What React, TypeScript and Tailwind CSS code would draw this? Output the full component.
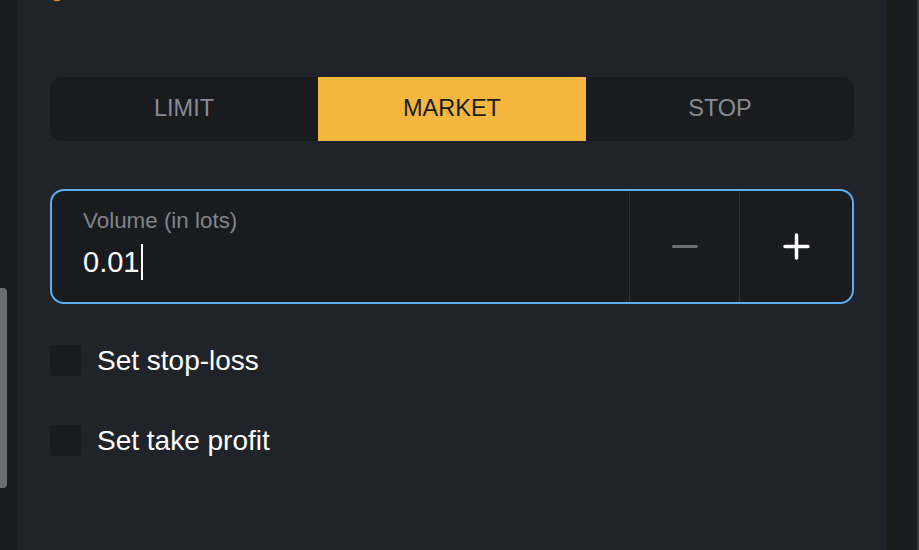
const tabs = ['LIMIT', 'MARKET', 'STOP'];

const OrderPanel = () => {
  return (
    <div className="flex h-[550px] w-[919px] overflow-hidden bg-[#1a1b1f] font-['Liberation_Sans',Arial,sans-serif]">
      {/* Left strip with scrollbar thumb */}
      <div className="w-[17px] shrink-0 pt-[288px]">
        <div className="h-[200px] w-[7px] rounded-r-[4px] bg-[#6b6c70]" />
      </div>

      {/* Main panel */}
      <main className="flex w-[870px] shrink-0 flex-col bg-[#20232a] px-[33px]">
        <div className="h-[77px] -ml-[33px] pl-[36px]">
          <svg width="8" height="2" viewBox="0 0 8 2">
            <path d="M0 0 Q4 2.4 8 0 Z" fill="#d9901c" />
          </svg>
        </div>

        {/* Order type tabs */}
        <div className="grid h-[64px] grid-cols-3 overflow-hidden rounded-[12px] bg-[#1a1b1f]">
          {tabs.map((t) => (
            <button
              key={t}
              className={`flex items-center justify-center text-[23.5px] ${
                t === 'MARKET' ? 'bg-[#f4b63f] text-[#1b1c20]' : 'text-[#878a96]'
              }`}
            >
              {t}
            </button>
          ))}
        </div>

        {/* Volume input */}
        <div className="mt-[48px] flex h-[115px] rounded-[14px] border-2 border-[#5aaef0] bg-[#1a1b1f]">
          <div className="flex flex-1 flex-col pl-[31px] pt-[17px]">
            <span className="text-[22.4px] leading-[25px] text-[#80838d]">Volume (in lots)</span>
            <div className="mt-[11px] flex h-[36px] items-center">
              <span className="text-[29px] leading-[36px] text-white">0.01</span>
              <span className="ml-[2px] h-[36px] w-[1.5px] bg-white" />
            </div>
          </div>
          <button className="flex w-[110px] items-center justify-center border-l border-[#2e3036]">
            <span className="h-[3px] w-[26px] rounded-full bg-[#6e6f72]" />
          </button>
          <button className="flex w-[113px] items-center justify-center border-l border-[#2e3036]">
            <svg width="27" height="27" viewBox="0 0 27 27">
              <path d="M13.5 2v23M2 13.5h23" stroke="#fff" strokeWidth="3.5" strokeLinecap="round" />
            </svg>
          </button>
        </div>

        {/* Options */}
        <label className="mt-[41px] flex h-[31px] items-center gap-[16px]">
          <span className="h-[31px] w-[31px] rounded-[4px] bg-[#1a1b1f]" />
          <span className="text-[28px] leading-[31px] text-white">Set stop-loss</span>
        </label>
        <label className="mt-[49px] flex h-[31px] items-center gap-[16px]">
          <span className="h-[31px] w-[31px] rounded-[4px] bg-[#1a1b1f]" />
          <span className="text-[28px] leading-[31px] text-white">Set take profit</span>
        </label>
      </main>

      {/* Right strip */}
      <div className="flex-1 border-r-2 border-[#3a3b40]" />
    </div>
  );
};

export default function App() {
  return <OrderPanel />;
}
